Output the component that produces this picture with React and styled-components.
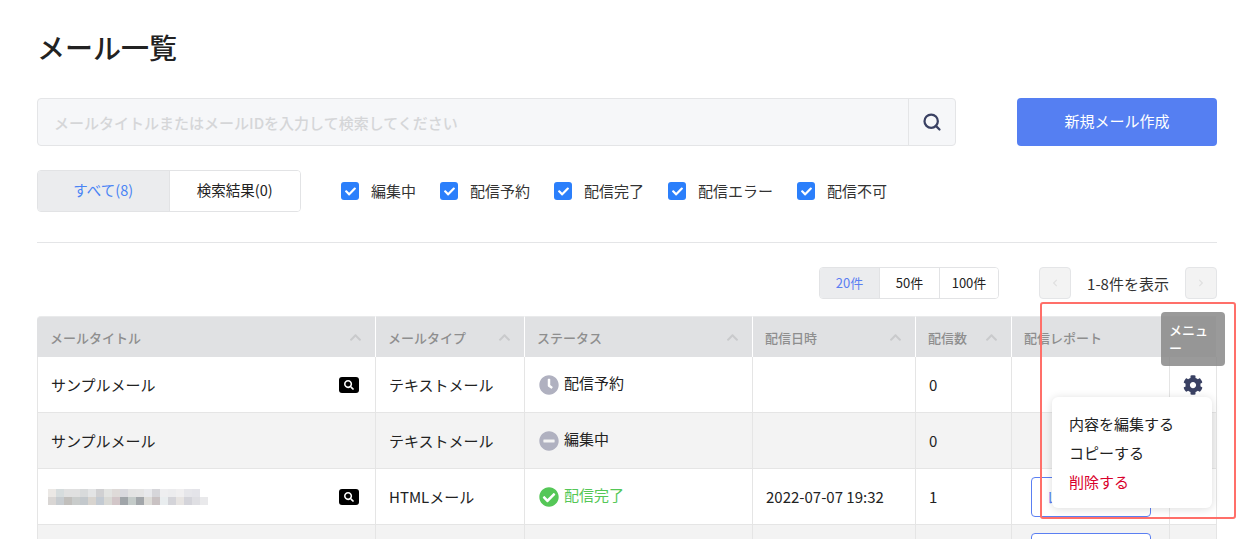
import React from 'react';
import styled, { createGlobalStyle } from 'styled-components';
import { FaCheck, FaCheckCircle, FaChevronLeft, FaChevronRight, FaChevronUp, FaClock, FaCog, FaMinusCircle, FaSearch } from 'react-icons/fa';
import { Search } from 'lucide-react';

const GlobalStyle = createGlobalStyle`
    html, body {
        margin: 0;
        height: 539px;
        overflow: hidden;
        background: #ffffff;
        color: #222222;
        font-family: "Noto Sans CJK JP", "Noto Sans", sans-serif;
    }
    * { box-sizing: border-box; }
`;

const Page = styled.div`
    position: relative;
    height: 539px;
    padding: 27px 29px 0 37px;
    overflow: hidden;
`;

const Title = styled.h1`
    margin: 0 0 31px;
    font-size: 28px;
    font-weight: 500;
    line-height: 40px;
    color: #222222;
`;

const SearchRow = styled.div`
    display: flex;
    justify-content: space-between;
    margin-bottom: 24px;
`;

const SearchBox = styled.div`
    display: flex;
    width: 919px;
    height: 48px;
    background: #f6f7f9;
    border: 1px solid #e4e5e7;
    border-radius: 4px;
`;

const SearchText = styled.div`
    flex: 1;
    padding-left: 16px;
    font-size: 15px;
    font-weight: 500;
    line-height: 48px;
    color: #d5d6d8;
`;

const SearchButton = styled.div`
    display: flex;
    align-items: center;
    justify-content: center;
    width: 47px;
    border-left: 1px solid #e4e5e7;
    color: #3a4163;
`;

const CreateButton = styled.button`
    width: 200px;
    height: 48px;
    padding: 0 0 3px;
    border: 0;
    border-radius: 4px;
    background: #557ff2;
    color: #ffffff;
    font-family: inherit;
    font-size: 15px;
    font-weight: 400;
`;

const FilterRow = styled.div`
    display: flex;
    align-items: center;
    padding-bottom: 30px;
    border-bottom: 1px solid #e4e5e7;
    margin-bottom: 24px;
`;

const Tabs = styled.div`
    display: flex;
    width: 264px;
    height: 42px;
    margin-right: 40px;
    border: 1px solid #e2e3e5;
    border-radius: 4px;
    overflow: hidden;
`;

const Tab = styled.div`
    flex: 1;
    text-align: center;
    font-size: 14.5px;
    line-height: 38px;
    color: ${props => (props.$active ? '#4a84f5' : '#222222')};
    background: ${props => (props.$active ? '#ebecee' : '#ffffff')};
    & + & { border-left: 1px solid #e2e3e5; }
`;

const Check = styled.label`
    display: flex;
    align-items: center;
    gap: 12px;
    margin-right: 24px;
    font-size: 15px;
    line-height: 22px;
    color: #333333;
`;

const CheckBox = styled.span`
    display: flex;
    align-items: center;
    justify-content: center;
    width: 18px;
    height: 18px;
    border-radius: 3px;
    background: #2b7ffb;
    color: #ffffff;
    font-size: 11px;
`;

const PagerRow = styled.div`
    display: flex;
    align-items: center;
    justify-content: flex-end;
    height: 32px;
    margin-bottom: 17px;
`;

const Sizes = styled.div`
    display: flex;
    height: 32px;
    margin-right: 40px;
    border: 1px solid #e2e3e5;
    border-radius: 4px;
    overflow: hidden;
`;

const Size = styled.div`
    width: ${props => props.$width}px;
    text-align: center;
    font-size: 13px;
    line-height: 30px;
    color: ${props => (props.$active ? '#5b7ff2' : '#222222')};
    background: ${props => (props.$active ? '#ebecee' : '#ffffff')};
    & + & { border-left: 1px solid #e2e3e5; }
`;

const PageButton = styled.div`
    display: flex;
    align-items: center;
    justify-content: center;
    width: 32px;
    height: 32px;
    border: 1px solid #e4e5e7;
    border-radius: 4px;
    background: #f3f3f3;
    color: #e0e0e0;
    font-size: 8px;
`;

const PageInfo = styled.div`
    width: 114px;
    text-align: center;
    font-size: 15px;
    color: #333333;
`;

const Table = styled.div`
    display: grid;
    grid-template-columns: 339px 149px 228px 163px 96px 158px 47px;
    width: 1180px;
`;

const HeadCell = styled.div`
    grid-column: span ${props => props.$span || 1};
    display: flex;
    align-items: center;
    justify-content: space-between;
    height: 41px;
    padding: 1px 13px 0 12px;
    border-top: 1px solid #e9eaeb;
    border-right: 1px solid #ffffff;
    background: #e0e1e3;
    color: #8e8e8e;
    font-size: 13px;
    font-weight: 500;
    &:first-child { padding-left: 13px; border-top-left-radius: 4px; }
    &:last-of-type { border-right: 0; border-top-right-radius: 4px; }
`;

const SortIcon = styled(FaChevronUp)`
    color: #c9cacc;
    font-size: 13px;
`;

const Cell = styled.div`
    position: relative;
    display: flex;
    align-items: center;
    justify-content: ${props => (props.$center ? 'center' : 'space-between')};
    height: 56px;
    padding: ${props => (props.$center ? '0' : '0 16px 0 13px')};
    border-left: ${props => (props.$first ? '1px solid #e5e5e5' : '0')};
    border-right: 1px solid #e5e5e5;
    border-bottom: 1px solid #e5e5e5;
    background: ${props => (props.$odd ? '#f3f3f3' : '#ffffff')};
    font-size: 15px;
    color: #222222;
`;

const PreviewBadge = styled.span`
    display: flex;
    align-items: center;
    justify-content: center;
    width: 20px;
    height: 16px;
    border-radius: 3px;
    background: #000000;
    color: #ffffff;
    font-size: 10px;
`;

const Status = styled.span`
    display: flex;
    align-items: center;
    gap: 5px;
    margin-left: 1px;
    color: ${props => props.$color || '#222222'};
    line-height: 1;
    & > span { margin-top: -5px; }
`;

const StatusIcon = styled.span`
    display: flex;
    color: ${props => props.$color};
    font-size: 20px;
    margin: 0 !important;
`;

const ReportButton = styled.button`
    flex: none;
    width: 120px;
    height: 40px;
    margin-left: 6px;
    padding: 0;
    border: 1px solid #5b7ff2;
    border-radius: 4px;
    background: #ffffff;
    color: #5b7ff2;
    font-family: inherit;
    font-size: 15px;
`;

const Gear = styled(FaCog)`
    color: #3a4163;
    font-size: 20px;
`;

const Tooltip = styled.div`
    position: absolute;
    top: 312px;
    left: 1161px;
    width: 64px;
    height: 54px;
    padding: 9px 8px;
    border-radius: 4px;
    background: rgba(136, 136, 136, 0.85);
    color: #ffffff;
    font-size: 13px;
    font-weight: 500;
    line-height: 18px;
`;

const Menu = styled.div`
    position: absolute;
    top: 397px;
    left: 1052px;
    width: 160px;
    height: 111px;
    padding: 12px 17px;
    border-radius: 6px;
    background: #ffffff;
    box-shadow: 0 1px 8px rgba(0, 0, 0, 0.14);
`;

const MenuItem = styled.div`
    font-size: 15px;
    line-height: 29px;
    color: ${props => (props.$danger ? '#d9002c' : '#222222')};
`;

const Highlight = styled.div`
    position: absolute;
    top: 302px;
    left: 1040px;
    width: 196px;
    height: 217px;
    border: 2px solid #ff6f69;
    border-radius: 3px;
    pointer-events: none;
`;

const mosaic = [
    ['#ebe8e5', '#d6dcdd', '#e0e0e0', '#e0e0e0', '#d8dadb', '#e3e4e5', '#d0d0d2', '#e2e3e1', '#dedad8', '#d9d9de', '#e3e3e3', '#e4e4e4', '#e8e9ec', '#d6d6da', '#eeeef0', '#ececee', '#f0eff0', '#e6e6ea', '#e4e4e9'],
    ['#d9d6d4', '#c7ccd0', '#c1bfbc', '#c9cccb', '#c3c8cc', '#d8d4cf', '#c3cad2', '#d9d9d5', '#d2c6c8', '#a0a5a9', '#c4cbc9', '#a2a6aa', '#dddcd8', '#c9c2c3', '#e9edef', '#d4d4d9', '#e7e4e2', '#d4d4da', '#dfdfe3', '#e9e9eb']
];

const checks = ['編集中', '配信予約', '配信完了', '配信エラー', '配信不可'];

function BlurredTitle() {
    return (
        <svg width="160" height="16" style={{ marginLeft: -3 }}>
            {mosaic.map((row, y) => row.map((fill, x) => (
                <rect key={`${x}-${y}`} x={x * 8} y={y * 8} width="8" height="8" fill={fill} />
            )))}
        </svg>
    );
}

function Row({ title, badge, type, status, date, count, report, odd }) {
    return (
        <>
            <Cell $odd={odd} $first>{title}{badge && <PreviewBadge><FaSearch /></PreviewBadge>}</Cell>
            <Cell $odd={odd}>{type}</Cell>
            <Cell $odd={odd}>{status}</Cell>
            <Cell $odd={odd}>{date}</Cell>
            <Cell $odd={odd}>{count}</Cell>
            <Cell $odd={odd}>{report && <ReportButton>{report}</ReportButton>}</Cell>
            <Cell $odd={odd} $center><Gear /></Cell>
        </>
    );
}

export default function App() {
    return (
        <Page>
            <GlobalStyle />
            <Title>メール一覧</Title>

            <SearchRow>
                <SearchBox>
                    <SearchText>メールタイトルまたはメールIDを入力して検索してください</SearchText>
                    <SearchButton><Search size={20} strokeWidth={2.7} /></SearchButton>
                </SearchBox>
                <CreateButton>新規メール作成</CreateButton>
            </SearchRow>

            <FilterRow>
                <Tabs>
                    <Tab $active>すべて(8)</Tab>
                    <Tab>検索結果(0)</Tab>
                </Tabs>
                {checks.map(label => (
                    <Check key={label}>
                        <CheckBox><FaCheck /></CheckBox>
                        {label}
                    </Check>
                ))}
            </FilterRow>

            <PagerRow>
                <Sizes>
                    <Size $active $width={59}>20件</Size>
                    <Size $width={60}>50件</Size>
                    <Size $width={59}>100件</Size>
                </Sizes>
                <PageButton><FaChevronLeft /></PageButton>
                <PageInfo>1-8件を表示</PageInfo>
                <PageButton><FaChevronRight /></PageButton>
            </PagerRow>

            <Table>
                <HeadCell>メールタイトル<SortIcon /></HeadCell>
                <HeadCell>メールタイプ<SortIcon /></HeadCell>
                <HeadCell>ステータス<SortIcon /></HeadCell>
                <HeadCell>配信日時<SortIcon /></HeadCell>
                <HeadCell>配信数<SortIcon /></HeadCell>
                <HeadCell $span={2}>配信レポート</HeadCell>

                <Row
                    title="サンプルメール"
                    badge
                    type="テキストメール"
                    status={<Status><StatusIcon $color="#b0b1c0"><FaClock /></StatusIcon><span>配信予約</span></Status>}
                    count="0"
                />
                <Row
                    odd
                    title="サンプルメール"
                    type="テキストメール"
                    status={<Status><StatusIcon $color="#b0b1c0"><FaMinusCircle /></StatusIcon><span>編集中</span></Status>}
                    count="0"
                />
                <Row
                    title={<BlurredTitle />}
                    badge
                    type="HTMLメール"
                    status={<Status $color="#55c757"><StatusIcon $color="#55c757"><FaCheckCircle /></StatusIcon><span>配信完了</span></Status>}
                    date="2022-07-07 19:32"
                    count="1"
                    report="レポート表示"
                />
                <Row odd report=" " />
            </Table>

            <Tooltip>メニュー</Tooltip>
            <Menu>
                <MenuItem>内容を編集する</MenuItem>
                <MenuItem>コピーする</MenuItem>
                <MenuItem $danger>削除する</MenuItem>
            </Menu>
            <Highlight />
        </Page>
    );
}
